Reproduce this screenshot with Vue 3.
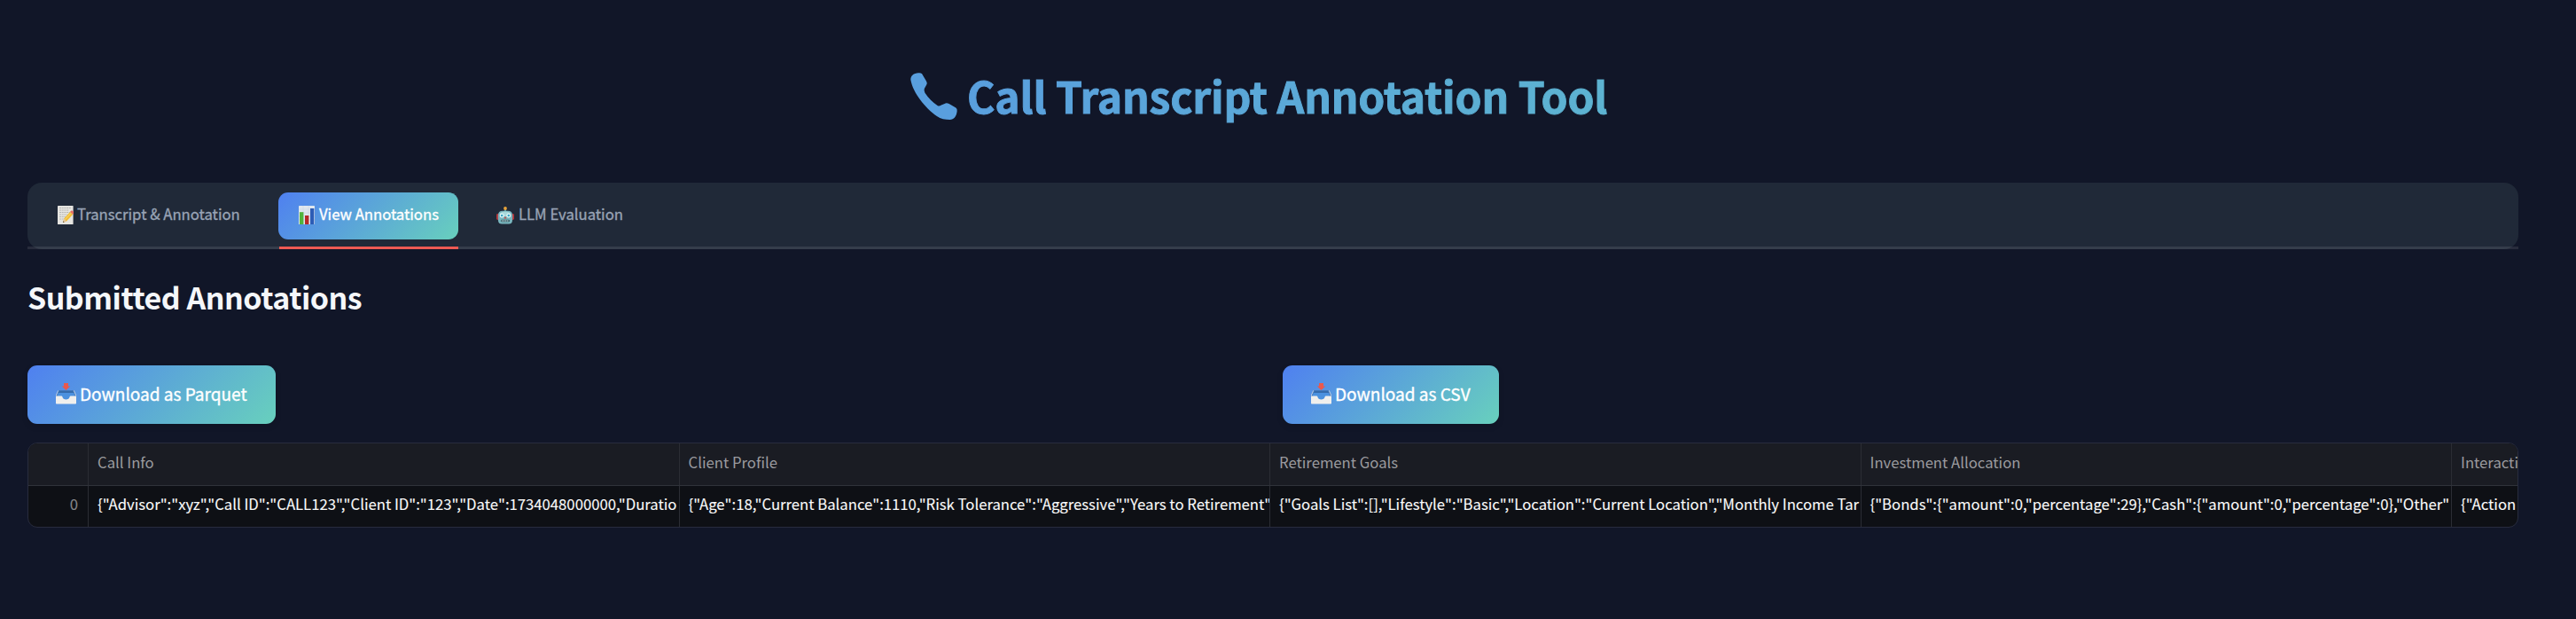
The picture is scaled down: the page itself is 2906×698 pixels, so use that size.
<script setup>
const columns = [
  { title: 'Call Info', value: '{"Advisor":"xyz","Call ID":"CALL123","Client ID":"123","Date":1734048000000,"Duratio' },
  { title: 'Client Profile', value: '{"Age":18,"Current Balance":1110,"Risk Tolerance":"Aggressive","Years to Retirement"' },
  { title: 'Retirement Goals', value: '{"Goals List":[],"Lifestyle":"Basic","Location":"Current Location","Monthly Income Tar' },
  { title: 'Investment Allocation', value: '{"Bonds":{"amount":0,"percentage":29},"Cash":{"amount":0,"percentage":0},"Other"' },
  { title: 'Interacti', value: '{"Action' },
]
const downloads = ['Download as Parquet', 'Download as CSV']
</script>

<template>
  <main class="page">
    <h1 class="title">
      <svg class="phone" viewBox="37 36 158 158">
        <path fill="#599fde" d="M38 60C38 46 48 38 64 37Q72 36 76 40L91 65Q95 72 91 77L84 90Q82 96 86 104Q104 131 129 147Q134 150 141 145L152 140Q158 136 167 140L190 154Q195 158 194 165C192 184 183 193 170 194C154 194 139 191 126 182C88 156 46 105 38 60Z" />
      </svg>
      <span class="title-text">Call Transcript Annotation Tool</span>
    </h1>

    <nav class="tabs">
      <div class="tab first">
        <svg class="icon note" viewBox="0 0 18 21">
          <rect width="17.6" height="21" rx="0.6" fill="#e6e5e1" />
          <path d="M2 2.5h13M2 5h11M2 7.5h12M2 10h9M2 12.5h7M2 15h5" stroke="#a9a9a7" stroke-width="0.8" stroke-dasharray="2 .7" />
          <path d="M6 19l1.2-4.5L14 7l3.2 2.8L10 17.4z" fill="#f2bd35" />
          <path d="M8.3 15.7l7-7.5" stroke="#fbdc72" />
          <path d="M14 7l1.3-1.4q2.8-.4 3 2.8L17.2 9.8z" fill="#e66d64" />
          <path d="M6 19l1.2-4.5L10 17.4z" fill="#e6c69a" /><path d="M6 19l.5-1.7 1 1z" fill="#333" />
        </svg>
        <span>Transcript &amp; Annotation</span>
      </div>
      <div class="tab active">
        <svg class="icon chart" viewBox="0 0 18 21">
          <rect width="18" height="21" rx="0.6" fill="#dfe7ef" />
          <path d="M0 4h18M0 8h18M0 12h18M0 16h18M5 0v21M11 0v21" stroke="#c5d2e0" stroke-width="0.5" />
          <path d="M1 7.2h4.4V21H1z" fill="#50b33c" /><path d="M7 11h4.4v10H7z" fill="#b52828" /><path d="M13 3h4.3v18H13z" fill="#2c5cb6" />
        </svg>
        <span>View Annotations</span>
      </div>
      <div class="tab last">
        <svg class="icon robot" viewBox="0 0 20 20">
          <rect y="8" width="3" height="7" rx="1.4" fill="#b3363b" /><rect x="17" y="8" width="3" height="7" rx="1.4" fill="#b3363b" />
          <path d="M9 2h2v4H9z" fill="#4a9aa7" /><circle cx="10" cy="2" r="1.9" fill="#e8a33a" />
          <path d="M1.8 10Q2 4.8 7 4.8h6q5 0 5.2 5.2l-.2 6q-.4 3.6-4 3.6H6q-3.6 0-4-3.6z" fill="#78b4bd" />
          <path d="M3.5 8Q5 5.5 10 5.5T16.5 8L15 11H5z" fill="#a8d8db" />
          <circle cx="6.2" cy="10" r="2.5" fill="#e2f5f5" /><circle cx="13.8" cy="10" r="2.5" fill="#e2f5f5" />
          <circle cx="6.2" cy="10" r="1.3" fill="#35a7c6" /><circle cx="13.8" cy="10" r="1.3" fill="#35a7c6" />
          <path d="M10 11l1.5 2.5h-3z" fill="#c94a43" />
          <rect x="5" y="14.7" width="10" height="2.6" rx="1" fill="#365f69" /><path d="M6 16h8" stroke="#e4eeee" stroke-dasharray="1.2 .7" />
        </svg>
        <span>LLM Evaluation</span>
      </div>
    </nav>

    <h2 class="heading">Submitted Annotations</h2>

    <div class="downloads">
      <div v-for="(label, i) in downloads" :key="label">
        <button class="download" :class="{ csv: i === 1 }">
          <svg class="tray" viewBox="0 0 23 24">
            <path d="M3 8h17l3 7H0z" fill="#4379bd" />
            <path d="M3.5 9h16l1.8 5.5-5.3 1.5-2 3H9l-2-3-5.3-1.5z" fill="#4b91df" />
            <path d="M3.5 9h16l.6 2H2.9z" fill="#346bac" />
            <path d="M0 14.5h6.2q1.1 0 1.3 1.3.7 2.7 4 2.7t4-2.7q.2-1.3 1.3-1.3H23v8.2q0 .8-.8.8H.8q-.8 0-.8-.8z" fill="#f0efed" />
            <path d="M0 14.5L2.7 8.3M23 14.5l-2.7-6.2" stroke="#d9dde2" stroke-width="0.8" />
            <path d="M9 0h5v3.5h2.2L11.5 8 6.8 3.5H9z" fill="#e9594e" />
          </svg>
          <span>{{ label }}</span>
        </button>
      </div>
    </div>

    <div class="table">
      <div class="row head">
        <div class="cell index"></div>
        <div v-for="c in columns" :key="c.title" class="cell">{{ c.title }}</div>
      </div>
      <div class="row body">
        <div class="cell index">0</div>
        <div v-for="c in columns" :key="c.title" class="cell">{{ c.value }}</div>
      </div>
    </div>
  </main>
</template>

<style>
body { background: #111628; }
</style>

<style scoped>
.page {
  box-sizing: border-box;
  width: 2906px;
  height: 698px;
  padding: 82px 65px 0 31px;
  overflow: hidden;
  background: #111628;
  font-family: "Noto Sans CJK SC", "Noto Sans", sans-serif;
  color: #f5f7fa;
  white-space: nowrap;
}
.title {
  display: flex;
  height: 124px;
  margin: 0;
  padding-left: 996px;
  font-size: 48px;
  font-weight: 700;
  line-height: 50px;
}
.phone { flex: none; width: 53px; height: 53px; margin-right: 11px; }
.title-text {
  height: 70px;
  letter-spacing: -0.18px;
  background: linear-gradient(100deg, #599fde, #5db3d1);
  -webkit-background-clip: text;
  background-clip: text;
  color: transparent;
  -webkit-text-stroke: 1px transparent;
}
.tabs {
  position: relative;
  display: flex;
  box-sizing: border-box;
  height: 75px;
  padding: 11px 10px;
  border-radius: 16px;
  background: #202938;
  font-size: 16.7px;
  font-weight: 400;
  color: #98a3b5;
}
.tabs::after {
  content: "";
  position: absolute;
  inset: auto 0 0;
  height: 3px;
  background: rgba(250, 250, 250, 0.1);
}
.tab {
  position: relative;
  display: flex;
  align-items: center;
  box-sizing: border-box;
  height: 53px;
  padding-bottom: 4px;
}
.tab span, .download span { line-height: 1; -webkit-text-stroke: 0.35px currentColor; }
.first { width: 273px; padding-left: 24px; }
.active {
  width: 203px;
  padding-left: 23px;
  border-radius: 11px;
  background: linear-gradient(135deg, #4f80f0, #68d0bd);
  color: #fff;
}
.active::after {
  content: "";
  position: absolute;
  z-index: 1;
  inset: auto 0 -11px 1px;
  height: 3px;
  background: #ee5a53;
}
.last { padding-left: 43px; }
.icon { flex: none; width: 18px; height: 21px; margin: 2px 5px 0 0; }
.note { margin-right: 4px; }
.robot { width: 20px; height: 20px; }
.heading {
  height: 131px;
  margin: 0;
  font-size: 34px;
  font-weight: 700;
  letter-spacing: -0.5px;
  line-height: 108px;
}
.downloads { display: grid; grid-template-columns: 1416px 1fr; height: 87px; }
.download {
  display: flex;
  align-items: center;
  box-sizing: border-box;
  width: 280px;
  height: 66px;
  padding: 0 0 3px 32px;
  border: 0;
  border-radius: 11px;
  background: linear-gradient(135deg, #4f80f0, #68d0bd);
  box-shadow: 0 3px 7px rgba(0, 0, 0, 0.12);
  color: #fff;
  font: 400 19.05px "Noto Sans CJK SC", sans-serif;
}
.csv { width: 244px; }
.tray { flex: none; width: 23px; height: 24px; margin-right: 4px; }
.table {
  box-sizing: border-box;
  width: 2810px;
  height: 96px;
  overflow: hidden;
  border: 1px solid #282c3e;
  border-radius: 11px;
  background: #0e1015;
}
.row {
  display: grid;
  grid-template-columns: 68px repeat(5, 666.5px);
  height: 46px;
  font-size: 16.7px;
  line-height: 41px;
}
.head {
  box-sizing: border-box;
  height: 48px;
  border-bottom: 1px solid #30333a;
  background: #1a1c23;
  color: #9a9b9f;
  line-height: 43px;
}
.body { color: #fafafa; -webkit-text-stroke: 0.1px currentColor; }
.cell {
  box-sizing: border-box;
  overflow: hidden;
  padding-left: 10px;
  border-right: 1px solid #2b2d34;
}
.index { padding-right: 11px; color: #85868a; text-align: right; }
</style>
